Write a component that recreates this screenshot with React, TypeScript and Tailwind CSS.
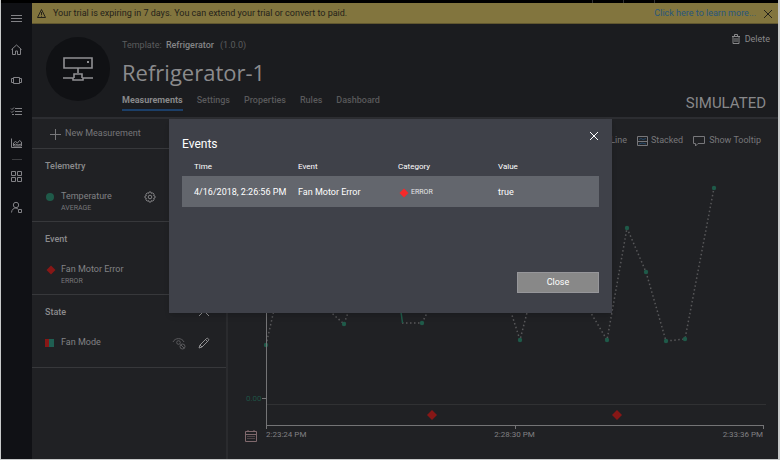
import type { ReactNode } from "react";

const strokeProps = {
  fill: "none",
  stroke: "currentColor",
  strokeWidth: 1,
} as const;

function Icon({ size = 12, children }: { size?: number; children: ReactNode }) {
  return (
    <svg width={size} height={size} viewBox={`0 0 ${size} ${size}`} aria-hidden="true" className="shrink-0" {...strokeProps}>
      {children}
    </svg>
  );
}

function CloseIcon() {
  return (
    <Icon size={10}>
      <path d="M1 1 L9 9 M9 1 L1 9" />
    </Icon>
  );
}

const navItems: { label: string; icon: ReactNode }[] = [
  { label: "Menu", icon: <path d="M1 3.5H12 M1 6.5H12 M1 9.5H12" /> },
  { label: "Home", icon: <path d="M1.5 6.5 L6.5 2 L11.5 6.5 M2.5 6 V11.5 H5.5 V8 H7.5 V11.5 H10.5 V6" /> },
  { label: "Devices", icon: <path d="M3.5 3.5 H9.5 V9.5 H3.5 Z M3.5 4.5 H1.5 V8.5 H3.5 M9.5 4.5 H11.5 V8.5 H9.5" /> },
  { label: "Rules", icon: <path d="M5 3.5H12 M5 6.5H12 M5 9.5H12 M1 3.5 L2 4.5 L4 2.5 M1 6.5 L2 7.5 L4 5.5 M2 9.5H4" /> },
  { label: "Analytics", icon: <path d="M1.5 2.5 V11.5 H12 M3.5 10 V7 L5.5 5.5 L7.5 7 L9.5 4.5 L11.5 6 V10 Z M3.5 9 L5.5 8 L8 9 L11.5 8" /> },
  { label: "Applications", icon: <path d="M1.5 1.5 H5.5 V5.5 H1.5 Z M7.5 1.5 H11.5 V5.5 H7.5 Z M1.5 7.5 H5.5 V11.5 H1.5 Z M7.5 7.5 H11.5 V11.5 H7.5 Z" /> },
  {
    label: "Administration",
    icon: (
      <>
        <circle cx="6" cy="4" r="2.7" />
        <path d="M1.5 11.5 C1.8 8.5 3.5 7 6 7 L8 8 M8.5 8.5 H11.5 V11.5 H8.5 Z" />
      </>
    ),
  },
];

function Sidebar() {
  return (
    <nav className="flex w-[31px] shrink-0 flex-col items-center bg-[#101115] text-[#828286]">
      {navItems.map((item, i) => (
        <div key={item.label} className="flex flex-col items-center">
          {i === 5 && <div className="my-px h-px w-2.5 bg-[#3c3d40]" />}
          <button type="button" aria-label={item.label} className="flex h-[31px] w-[31px] items-center justify-center">
            <Icon size={13}>{item.icon}</Icon>
          </button>
        </div>
      ))}
    </nav>
  );
}

function Banner() {
  return (
    <div className="flex h-[21px] items-center border-b border-[#61572f] bg-[#82753e] px-1 pt-px text-[9px] text-[#24221a]">
      <Icon size={11}>
        <path d="M5.5 1.5 L9.5 9.5 H1.5 Z M5.5 4 V7 M5.5 7.8 V8.6" />
      </Icon>
      <p className="ml-1.5">Your trial is expiring in 7 days. You can extend your trial or convert to paid.</p>
      <a href="#learn" className="ml-auto text-[#28567d]">Click here to learn more...</a>
      <button type="button" aria-label="Dismiss" className="ml-1.5 flex w-3 justify-center">
        <CloseIcon />
      </button>
    </div>
  );
}

function Header() {
  const tabs = ["Measurements", "Settings", "Properties", "Rules", "Dashboard"];
  return (
    <header className="flex h-[95px] border-b-2 border-[#2c2d31] bg-[#1b1c1f] pl-3.5">
      <div className="mt-[13px] flex h-16 w-16 shrink-0 items-center justify-center rounded-full bg-[#101114] text-[#909093]">
        <svg width="32" height="26" viewBox="0 0 32 26" fill="none" stroke="currentColor" strokeWidth="2" aria-hidden="true">
          <path d="M2 2 H30 V12 H2 Z M16 12 V17 M1 22 H11 V24 H21 V22 H31 M12 22 V18 H20 V22" strokeWidth="1.6" />
          <rect x="25" y="5" width="2" height="2" fill="currentColor" stroke="none" />
        </svg>
      </div>
      <div className="ml-3 mt-3.5 flex flex-col">
        <p className="h-3.5 text-[9px] leading-[14px] text-[#5c5c5e]">
          Template: <span className="ml-0.5 font-medium text-[#858587]">Refrigerator</span>
          <span className="ml-1.5">(1.0.0)</span>
        </p>
        <h1 className="mt-1 h-8 font-['Open_Sans',sans-serif] text-[22px] leading-8 text-[#8b8b8d]">Refrigerator-1</h1>
        <div className="mt-[5px] flex gap-3.5 text-[9px] font-medium leading-[14px] text-[#59595b]">
          {tabs.map((tab, i) => (
            <a
              key={tab}
              href={`#${tab.toLowerCase()}`}
              className={i === 0 ? "border-b-2 border-[#1c3f68] pb-0.5 font-bold text-[#88888a]" : "pb-0.5"}
            >
              {tab}
            </a>
          ))}
        </div>
      </div>
      <div className="ml-auto flex flex-col items-end justify-between pb-1 pr-2 pt-2 text-[#88888a]">
        <button type="button" className="flex items-center gap-1 text-[9px] leading-[14px]">
          <Icon size={10}>
            <path d="M1 2.5 H9 M3.5 2 V0.5 H6.5 V2 M2 3 V9.5 H8 V3 M4 4 V8 M6 4 V8" />
          </Icon>
          Delete
        </button>
        <p className="pr-1 text-[15px] leading-5">SIMULATED</p>
      </div>
    </header>
  );
}

function Chevron() {
  return (
    <Icon>
      <path d="M1 9 L6 4 L11 9" />
    </Icon>
  );
}

function Section({ title, marker, name, detail, actions }: {
  title: string;
  marker: ReactNode;
  name: string;
  detail?: string;
  actions?: ReactNode;
}) {
  return (
    <section className="flex h-[73px] flex-col border-b border-[#37383b] pl-[13px] pr-4">
      <div className="mt-[11px] flex h-[14px] items-center justify-between text-[#8b8b8d]">
        <h2 className="text-[9px] font-medium">{title}</h2>
        <button type="button" aria-label={`Collapse ${title}`}><Chevron /></button>
      </div>
      <div className="mt-[15px] flex text-[9px] leading-[14px] text-[#828284]">
        <div className="flex h-4 w-4 shrink-0 items-center">{marker}</div>
        <div>
          <p>{name}</p>
          {detail && <p className="text-[7px] leading-[10px] text-[#77777a]">{detail}</p>}
        </div>
        <div className="ml-auto flex h-4 items-center">{actions}</div>
      </div>
    </section>
  );
}

function MeasurementPanel() {
  return (
    <aside className="w-[196px] shrink-0 border-r-2 border-[#2a2b2e]">
      <button type="button" className="flex h-[30px] w-full items-center gap-1 border-b border-[#37383b] pl-[17px] text-[9px] text-[#77777a]">
        <Icon><path d="M6.5 1 V12 M1 6.5 H12" /></Icon>
        New Measurement
      </button>
      <Section
        title="Telemetry"
        name="Temperature"
        detail="AVERAGE"
        marker={<span className="ml-px h-2 w-2 rounded-full bg-[#1f5a49]" />}
        actions={
          <button type="button" aria-label="Temperature settings" className="mr-[54px] text-[#828284]">
            <Icon>
              <path d="M5 1 H7 L7.4 2.4 L8.8 1.9 L10.1 3.2 L9.6 4.6 L11 5 V7 L9.6 7.4 L10.1 8.8 L8.8 10.1 L7.4 9.6 L7 11 H5 L4.6 9.6 L3.2 10.1 L1.9 8.8 L2.4 7.4 L1 7 V5 L2.4 4.6 L1.9 3.2 L3.2 1.9 L4.6 2.4 Z" />
              <circle cx="6" cy="6" r="1.8" />
            </Icon>
          </button>
        }
      />
      <Section
        title="Event"
        name="Fan Motor Error"
        detail="ERROR"
        marker={<svg width="10" height="10" viewBox="0 0 10 10" className="ml-px fill-[#871716]"><path d="M5 0.5 L9.5 5 L5 9.5 L0.5 5Z" /></svg>}
      />
      <Section
        title="State"
        name="Fan Mode"
        marker={<span className="h-2 w-[9px] border-l-4 border-[#871716] bg-[#1f5f52]" />}
        actions={
          <div className="flex gap-3">
            <button type="button" aria-label="Hide Fan Mode" className="text-[#5b5b5e]">
              <Icon size={14}>
                <path d="M1 6 C3 1.5 10 1.5 12 6" />
                <circle cx="6.5" cy="6.5" r="1.8" />
                <circle cx="10.5" cy="10.5" r="2.5" />
                <path d="M8.8 8.8 L12.2 12.2" />
              </Icon>
            </button>
            <button type="button" aria-label="Edit Fan Mode" className="text-[#909092]">
              <Icon><path d="M1 11 L2 8 L8.5 1.5 C9.5 0.5 11.5 2.5 10.5 3.5 L4 10 Z M7.5 2.5 L9.5 4.5 M2 8 L4 10" /></Icon>
            </button>
          </div>
        }
      />
    </aside>
  );
}

const readings: [number, number][] = [
  [266, 345], [285, 262], [305, 290], [325, 307], [344, 324], [363, 270], [383, 240],
];
const laterReadings: [number, number][] = [
  [402, 323], [422, 323], [441, 285], [461, 240], [480, 220], [500, 278], [520, 340], [539, 266],
  [559, 240], [588, 308], [607, 340], [627, 228], [646, 272], [666, 341], [685, 339], [714, 188],
];

function Chart() {
  const toLine = (points: [number, number][]) => points.map((p) => p.join(",")).join(" ");
  return (
    <svg viewBox="228 160 550 270" className="block w-full" role="img" aria-label="Temperature over time">
      <g fill="none" stroke="#58585a" strokeWidth="1.5" strokeDasharray="1.5 2.5">
        <polyline points={toLine(readings)} />
        <polyline points={toLine(laterReadings)} />
      </g>
      <path d="M398 290 L402.5 323" stroke="#1f5a49" strokeWidth="1.5" />
      <g fill="#1f5a49">
        {[...readings, ...laterReadings.filter(([x]) => x !== 402)].map(([x, y]) => (
          <circle key={x} cx={x} cy={y} r="2.2" />
        ))}
      </g>
      <path d="M266 404.5 H766" stroke="#303133" />
      <path d="M266.5 160 V429 M262 398.5 H266 M266 425.5 H763.5 M515.5 425 V429 M763.5 425 V429" fill="none" stroke="#747476" />
      <text x="246" y="401" fontSize="8" fill="#1f5245">0.00</text>
      <g fill="#871716">
        <path d="M432 410 L437 415 L432 420 L427 415Z" />
        <path d="M617 410 L622 415 L617 420 L612 415Z" />
      </g>
    </svg>
  );
}

function ChartPanel() {
  return (
    <main className="flex min-w-0 flex-1 flex-col text-[#77777a]">
      <div className="flex h-[41px] items-center justify-end gap-2.5 pr-[17px] pt-[3px] text-[9px]">
        <button type="button" className="flex items-center gap-1">
          <Icon><path d="M1 9 L4 5 L7 8 L11 2" /></Icon>
          Line
        </button>
        <button type="button" className="flex items-center gap-0.5">
          <Icon>
            <path d="M0.5 1.5 H10.5 V10.5 H0.5 Z M0.5 6.5 H10.5" />
            <path d="M2 4.5 L4 3.5 L6 4.5 L9 3.5 M2 9 L5 8 L9 9" stroke="#254a6b" />
          </Icon>
          Stacked
        </button>
        <button type="button" className="flex items-center gap-1">
          <Icon><path d="M0.5 1.5 H11.5 V8.5 H5 L2.5 11 V8.5 H0.5 Z" /></Icon>
          Show Tooltip
        </button>
      </div>
      <Chart />
      <div className="flex pl-[17px] pr-[15px] text-[8px] leading-[10px] text-[#808083]">
        <button type="button" aria-label="Choose dates" className="mr-[9px] text-[#80696d]">
          <Icon>
            <path d="M0.5 1.5 H11.5 V11.5 H0.5 Z M0.5 4.5 H11.5 M3 0 V2 M9 0 V2" />
            <path d="M2.5 6.5 H10 M2.5 8.5 H10" strokeDasharray="1 1" />
          </Icon>
        </button>
        <div className="flex flex-1 justify-between">
          <span>2:23:24 PM</span>
          <span>2:28:30 PM</span>
          <span>2:33:36 PM</span>
        </div>
      </div>
    </main>
  );
}

function EventsDialog() {
  return (
    <div role="dialog" aria-modal="true" aria-labelledby="events-title" className="flex h-[194px] w-[443px] flex-col bg-[#3f4149] px-[13px] pb-5 text-white shadow-md">
      <div className="flex justify-between">
        <h2 id="events-title" className="mt-4 text-[12px] leading-[18px]">Events</h2>
        <button type="button" aria-label="Close dialog" className="mt-3 h-2.5"><CloseIcon /></button>
      </div>
      <table className="mt-1.5 w-full table-fixed text-left text-[9px]">
        <colgroup>
          <col className="w-[116px]" />
          <col className="w-[100px]" />
          <col className="w-[100px]" />
          <col />
        </colgroup>
        <thead>
          <tr className="h-[17px] text-[8px] leading-[10px]">
            <th className="pb-0.5 pl-3 font-normal">Time</th>
            <th className="pb-0.5 font-normal">Event</th>
            <th className="pb-0.5 font-normal">Category</th>
            <th className="pb-0.5 font-normal">Value</th>
          </tr>
        </thead>
        <tbody>
          <tr className="h-[31px] bg-[#63666d]">
            <td className="whitespace-nowrap pl-3 pt-0.5">4/16/2018, 2:26:56 PM</td>
            <td className="pt-0.5">Fan Motor Error</td>
            <td className="pt-0.5">
              <span className="flex items-center gap-0.5 pl-px text-[7px] text-[#e6e6e8]">
                <svg width="10" height="10" viewBox="0 0 10 10" className="fill-[#f52a2a]" aria-hidden="true"><path d="M5 0.5 L9.5 5 L5 9.5 L0.5 5Z" /></svg>
                ERROR
              </span>
            </td>
            <td className="pt-0.5">true</td>
          </tr>
        </tbody>
      </table>
      <button type="button" className="mt-auto h-[21px] w-[82px] self-end border border-[#96969a] bg-[#888888] pt-px text-[9px]">Close</button>
    </div>
  );
}

export default function App() {
  return (
    <div className="relative flex min-h-screen flex-col border-b border-l border-r-2 border-[#c9cbcb] bg-[#202124] font-[Roboto,sans-serif]">
      <div className="flex h-[3px] justify-end gap-[30px] bg-black pr-[123px]">
        <span className="w-px bg-[#333333]" />
        <span className="w-px bg-[#333333]" />
        <span className="w-px bg-[#333333]" />
      </div>
      <div className="flex flex-1">
        <Sidebar />
        <div className="flex min-w-0 flex-1 flex-col">
          <Banner />
          <Header />
          <div className="flex flex-1">
            <MeasurementPanel />
            <ChartPanel />
          </div>
        </div>
      </div>
      <div className="absolute inset-0 flex items-start justify-center pl-0.5 pt-[119px]">
        <EventsDialog />
      </div>
    </div>
  );
}
